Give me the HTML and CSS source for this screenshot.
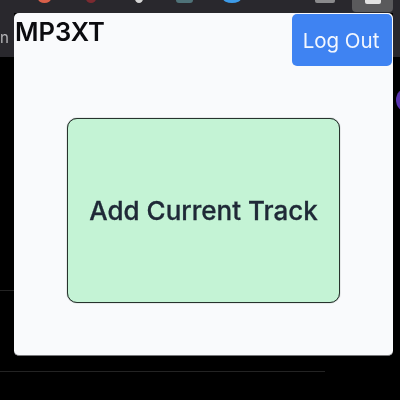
FILE: index.html
```html
<!DOCTYPE html>
<html>
<head>
	<title>MP3XT</title>
	<link rel="stylesheet" href="styles.css">
</head>
<body>
	<div class="toolbar">
		<span class="tb-icon tb-red"></span>
		<span class="tb-icon tb-darkred"></span>
		<span class="tb-icon tb-white"></span>
		<span class="tb-icon tb-teal"></span>
		<span class="tb-icon tb-blue"></span>
		<span class="tb-icon tb-grey"></span>
		<span class="tb-active"><span class="tb-active-icon"></span></span>
	</div>

	<div class="behind-left"><span class="behind-letter">n</span></div>
	<div class="behind-right"></div>
	<div class="behind-dot"></div>
	<div class="behind-line behind-line-left"></div>
	<div class="behind-line behind-line-bottom"></div>

	<div class="popup">
		<div class="popup-header">
			<span class="title">MP3XT</span>
			<button class="logout">Log Out</button>
		</div>
		<div class="popup-main">
			<button class="add-track">Add Current Track</button>
		</div>
	</div>
</body>
</html>
```

FILE: styles.css
```css
html, body{
	height: 100%;
}
body{
	background: #000;
	margin: 0;
	overflow: hidden;
	font-family: Inter, "Liberation Sans", sans-serif;
	filter: blur(0.5px);
}
.toolbar{
	background: #29282d;
	height: 13px;
	position: relative;
	overflow: hidden;
}
.tb-icon{
	position: absolute;
	top: -6px;
	height: 9px;
	border-radius: 50%;
}
.tb-red{
	left: 38px;
	width: 13px;
	background: #d9604a;
}
.tb-darkred{
	left: 86px;
	width: 10px;
	background: #7c2a30;
}
.tb-white{
	left: 135px;
	width: 8px;
	background: #d5d5d5;
}
.tb-teal{
	left: 176px;
	width: 17px;
	border-radius: 3px;
	background: #4f7278;
}
.tb-blue{
	left: 223px;
	width: 18px;
	background: #3d9be8;
}
.tb-grey{
	left: 315px;
	width: 20px;
	border-radius: 2px;
	background: #8a8a8c;
}
.tb-active{
	position: absolute;
	left: 352px;
	top: 0;
	width: 41px;
	height: 12px;
	background: #5a5a5c;
	border-radius: 0 0 4px 4px;
}
.tb-active-icon{
	position: absolute;
	left: 13px;
	top: -5px;
	width: 16px;
	height: 9px;
	background: #e2e2e2;
	border-radius: 2px;
}
.behind-left{
	position: absolute;
	left: 0;
	top: 13px;
	width: 14px;
	height: 44px;
	background: #29282d;
}
.behind-letter{
	position: absolute;
	left: 0;
	top: 16px;
	font-size: 15px;
	line-height: 18px;
	color: #b5b5b8;
}
.behind-right{
	position: absolute;
	left: 393px;
	top: 13px;
	width: 7px;
	height: 44px;
	background: #29282d;
}
.behind-dot{
	position: absolute;
	left: 396px;
	top: 88px;
	width: 22px;
	height: 24px;
	border-radius: 50%;
	background: #5a35b0;
}
.behind-line{
	position: absolute;
	height: 1px;
	background: #232323;
}
.behind-line-left{
	left: 0;
	top: 290px;
	width: 14px;
}
.behind-line-bottom{
	left: 0;
	top: 371px;
	width: 325px;
}
.popup{
	position: relative;
	margin-left: 14px;
	width: 379px;
	height: 343px;
	background: #f9fafc;
	border-radius: 5px;
	border-bottom: 1px solid #77777a;
	box-sizing: border-box;
	display: flex;
	flex-direction: column;
	overflow: hidden;
}
.popup-header{
	display: flex;
	justify-content: space-between;
	align-items: flex-start;
	padding-left: 1px;
}
.title{
	font-size: 25.5px;
	font-weight: 600;
	line-height: 38px;
	color: #0b0b0f;
}
.logout{
	width: 100px;
	height: 52px;
	margin: 1px 1px 0 0;
	padding: 0 2px 0 0;
	border: none;
	border-radius: 5px;
	background: #3f83f2;
	color: #f3f7fe;
	font-family: inherit;
	font-size: 20.5px;
}
.popup-main{
	padding: 52px 0 0 53px;
}
.add-track{
	width: 273px;
	height: 185px;
	padding: 0;
	border: 1px solid #27332d;
	box-shadow: 0 0 1px #46544e;
	border-radius: 10px;
	background: #c4f3d5;
	color: #1f2937;
	font-family: inherit;
	font-size: 26px;
	font-weight: 500;
	-webkit-text-stroke: 0.3px #1f2937;
}
```
